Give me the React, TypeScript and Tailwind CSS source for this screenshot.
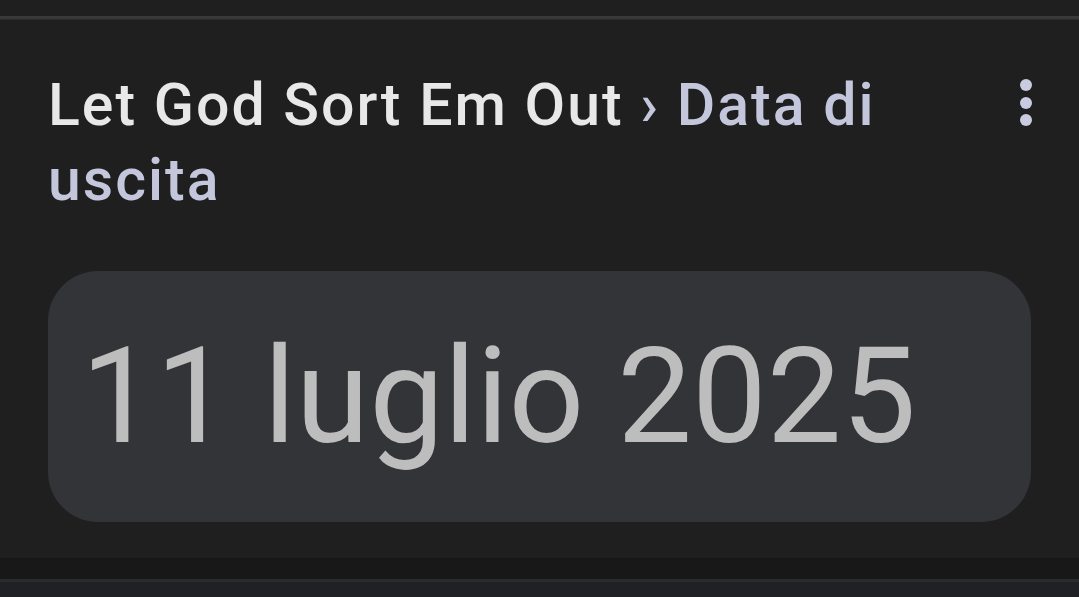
import React from 'react'

export default function App() {
  return (
    <div className="w-[1079px] h-[597px] overflow-hidden bg-[#1f1f1f] flex flex-col" style={{ fontFamily: 'Roboto, "Noto Sans", sans-serif' }}>
      <div className="h-[16px] shrink-0" />
      <div className="h-[3px] shrink-0 bg-[#383838]" />
      <div className="h-px shrink-0 bg-[#2a2a2a]" />
      {/* card */}
      <div className="h-[538px] shrink-0 flex flex-col px-[48px] pt-[47px]">
        <div className="flex items-start justify-between">
          <div className="text-[59px] leading-[75px] font-medium tracking-[2px] text-[#e8e8e8] w-[900px]">
            Let God Sort Em Out <span className="text-[#c4c7dc]">› Data di uscita</span>
          </div>
          <div className="flex flex-col gap-[5.5px] pt-[12px] mr-[-1px]">
            <span className="w-[12px] h-[12px] rounded-full bg-[#c9cbe0]" />
            <span className="w-[12px] h-[12px] rounded-full bg-[#c9cbe0]" />
            <span className="w-[12px] h-[12px] rounded-full bg-[#c9cbe0]" />
          </div>
        </div>
        <div className="mt-[54px] h-[251px] rounded-[50px] bg-[#333438] flex items-center pl-[33px]">
          <span className="text-[133px] leading-none text-[#bdbdbd]">11 luglio 2025</span>
        </div>
      </div>
      <div className="h-[21px] shrink-0 bg-[#181818]" />
      <div className="h-[3px] shrink-0 bg-[#2b2c2f]" />
      <div className="flex-1 bg-[#202124]" />
    </div>
  )
}
